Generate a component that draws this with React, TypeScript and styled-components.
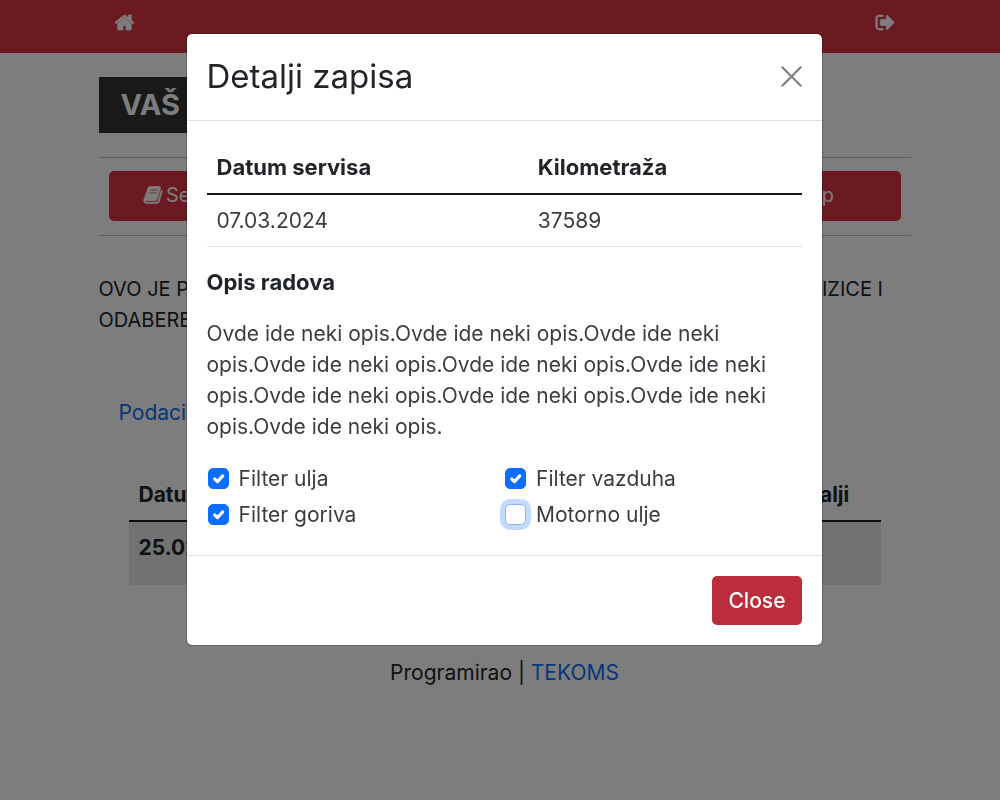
import React from "react";
import styled, { createGlobalStyle } from "styled-components";

const GlobalStyle = createGlobalStyle`
  *, *::before, *::after { box-sizing: border-box; }
  body {
    margin: 0;
    background: #fff;
    color: #212529;
    font-family: Inter, "Open Sans", sans-serif;
    font-size: 21px;
    line-height: 31px;
  }
  a { color: #0d6efd; text-decoration: none; }
  h1, h2, h3, p { margin: 0; }
`;

const TopBar = styled.header`
  height: 53px;
  padding-left: 9px;
  background: #dc3545;
`;

const TopBarInner = styled.nav`
  display: flex;
  justify-content: space-between;
  max-width: 812px;
  height: 45px;
  margin: 0 auto;
  padding: 0 15px;
  align-items: center;
`;

const IconLink = styled.a`
  display: flex;
  color: #fff;
`;

const Page = styled.main`
  padding: 24px 0 24px 9px;
`;

const Container = styled.div`
  max-width: 812px;
  margin: 0 auto;
`;

const Logo = styled.div`
  display: inline-block;
  padding: 0 22px;
  background: #333;
  color: #fff;
  font-size: 29px;
  font-weight: 700;
  line-height: 56px;
  vertical-align: top;
`;

const Actions = styled.div`
  display: grid;
  grid-template-columns: repeat(3, 1fr);
  gap: 20px;
  margin-top: 24px;
  padding: 13px 10px 14px;
  border-top: 1px solid #bcbdbf;
  border-bottom: 1px solid #bcbdbf;
`;

const Button = styled.button`
  display: inline-flex;
  align-items: center;
  justify-content: center;
  gap: 3px;
  padding: 9px 16px;
  border: 0;
  border-radius: 5px;
  background: ${(p: { $active?: boolean }) => (p.$active ? "#bb2d3b" : "#dc3545")};
  color: #fff;
  font: inherit;
  font-weight: 500;
  white-space: nowrap;
  cursor: pointer;
`;

const ActionButton = styled(Button)`
  height: 50px;
  padding: 9px 16px 11px;
  font-size: 20px;
  font-weight: 400;
`;

const Intro = styled.p`
  margin-top: 38px;
  font-size: 20px;
`;

const Records = styled.section`
  padding: 61px 30px 0;
`;

const RecordsLink = styled.a`
  display: inline-block;
  margin-left: -10px;
`;

const Table = styled.table`
  width: 100%;
  border-collapse: separate;
  border-spacing: 0;
  table-layout: fixed;
  text-align: left;

  th, td { padding: 10px; vertical-align: top; }
  thead th { border-bottom: 2px solid #16191c; }
`;

const RecordsTable = styled(Table)`
  margin-top: 41px;

  tbody tr { height: 63px; background: #e9e9e9; }
  th:last-child { width: 106px; }
`;

const Footer = styled.footer`
  margin-top: 72px;
  text-align: center;
`;

const Backdrop = styled.div`
  position: fixed;
  inset: 0;
  display: flex;
  align-items: flex-start;
  justify-content: center;
  padding: 33px 0 33px 8px;
  overflow: auto;
  background: rgba(0, 0, 0, 0.51);
`;

const Dialog = styled.section`
  width: 100%;
  max-width: 637px;
  border: 1px solid rgba(0, 0, 0, 0.2);
  border-radius: 6px;
  background: #fff;
  background-clip: padding-box;
`;

const DialogHeader = styled.div`
  display: flex;
  align-items: center;
  justify-content: space-between;
  padding: 19px 20px 20px;
  border-bottom: 1px solid #dee2e6;
`;

const DialogTitle = styled.h2`
  font-size: 33px;
  font-weight: 400;
  line-height: 47px;
`;

const CloseIconButton = styled.button`
  display: flex;
  padding: 0;
  border: 0;
  background: none;
  color: #000;
  opacity: 0.5;
  cursor: pointer;
`;

const DialogBody = styled.div`
  display: flex;
  flex-direction: column;
  gap: 20px;
  padding: 21px 20px 20px;
  color: #3a3e42;
`;

const DetailsTable = styled(Table)`
  th { color: #212529; font-size: 22px; }
  th:first-child { width: 54%; }
  td { border-bottom: 1px solid #dee2e6; }
`;

const SectionTitle = styled.h3`
  color: #212529;
  font-size: 22px;
  font-weight: 700;
`;

const CheckGrid = styled.div`
  display: grid;
  grid-template-columns: 1fr 1fr;
  row-gap: 5px;
  padding: 1px 0 5px;
`;

const CheckLabel = styled.label`
  display: flex;
  align-items: center;
  gap: 10px;
`;

const CheckBoxFrame = styled.span`
  display: grid;
  margin-left: 1px;

  > * { grid-area: 1 / 1; }
  svg { visibility: hidden; pointer-events: none; }
  input:checked + svg { visibility: visible; }
`;

const CheckInput = styled.input`
  appearance: none;
  width: 21px;
  height: 21px;
  margin: 0;
  border: 1px solid #bfbfbf;
  border-radius: 5px;
  background: #fff;

  &:checked { border-color: #0d6efd; background: #0d6efd; }
  &:focus {
    outline: none;
    border-color: #86b7fe;
    box-shadow: 0 0 0 5px rgba(13, 110, 253, 0.25);
  }
`;

const DialogFooter = styled.div`
  display: flex;
  justify-content: flex-end;
  padding: 20px;
  border-top: 1px solid #dee2e6;
`;

const icons = {
  home: "M1472 992v480q0 26-19 45t-45 19h-384v-384h-256v384h-384q-26 0-45-19t-19-45v-480q0-1 .5-3t.5-3l575-474 575 474q1 2 1 6zm223-69l-62 74q-8 9-21 11h-3q-13 0-21-7l-692-577-692 577q-12 8-24 7-13-2-21-11l-62-74q-8-10-7-23.5t11-21.5l719-599q32-26 76-26t76 26l244 204v-195q0-14 9-23t23-9h192q14 0 23 9t9 23v408l219 182q10 8 11 21.5t-7 23.5z",
  signOut:
    "M704 1440q0 4 1 20t.5 26.5-3 23.5-10 19.5-20.5 6.5h-320q-119 0-203.5-84.5t-84.5-203.5v-704q0-119 84.5-203.5t203.5-84.5h320q13 0 22.5 9.5t9.5 22.5q0 4 1 20t.5 26.5-3 23.5-10 19.5-20.5 6.5h-320q-66 0-113 47t-47 113v704q0 66 47 113t113 47h312l11.5 1 11.5 3 8 5.5 7 9 2 13.5zm928-544q0 26-19 45l-544 544q-19 19-45 19t-45-19-19-45v-288h-448q-26 0-45-19t-19-45v-384q0-26 19-45t45-19h448v-288q0-26 19-45t45-19 45 19l544 544q19 19 19 45z",
  book: "M1703 478q40 57 18 129l-275 906q-19 64-76.5 107.5t-122.5 43.5h-923q-77 0-148.5-53.5t-99.5-131.5q-24-67-2-127 0-4 3-27t4-37q1-8-3-21.5t-3-19.5q2-11 8-21t16.5-23.5 16.5-23.5q23-38 45-91.5t30-91.5q3-10 .5-30t-.5-28q3-11 17-28t17-23q21-36 42-92t25-90q1-9-2.5-32t.5-28q4-13 22-30.5t22-22.5q19-26 42.5-84.5t27.5-96.5q1-8-3-25.5t-2-26.5q2-8 9-18t18-23 17-21q8-12 16.5-30.5t15-35 16-36 19.5-32 26.5-23.5 36-11.5 47.5 5.5l-1 3q38-9 51-9h761q74 0 114 56t18 130l-274 906q-36 119-71.5 153.5t-128.5 34.5h-869q-27 0-38 15-11 16-1 43 24 70 144 70h923q29 0 56-15.5t35-41.5l300-987q7-22 5-57 38 15 59 43zm-1064 2q-4 13 2 22.5t20 9.5h608q13 0 25.5-9.5t16.5-22.5l21-64q4-13-2-22.5t-20-9.5h-608q-13 0-25.5 9.5t-16.5 22.5zm-83 256q-4 13 2 22.5t20 9.5h608q13 0 25.5-9.5t16.5-22.5l21-64q4-13-2-22.5t-20-9.5h-608q-13 0-25.5 9.5t-16.5 22.5z",
};

interface IconProps {
  name: keyof typeof icons;
  size?: number;
  bold?: boolean;
}

function Icon({ name, size = 20, bold }: IconProps) {
  return (
    <svg
      width={size}
      height={size}
      viewBox="0 0 1792 1792"
      fill="currentColor"
      stroke="currentColor"
      strokeWidth={bold ? 60 : 0}
      aria-hidden="true"
    >
      <path d={icons[name]} />
    </svg>
  );
}

interface CheckProps {
  label: string;
  checked?: boolean;
  focused?: boolean;
}

function Check({ label, checked, focused }: CheckProps) {
  return (
    <CheckLabel>
      <CheckBoxFrame>
        <CheckInput type="checkbox" defaultChecked={checked} autoFocus={focused} />
        <svg
          width="21"
          height="21"
          viewBox="0 0 20 20"
          fill="none"
          stroke="#fff"
          strokeWidth="3"
          strokeLinecap="round"
          strokeLinejoin="round"
        >
          <path d="M6.5 10.5l2.5 2.5 5-5.5" />
        </svg>
      </CheckBoxFrame>
      {label}
    </CheckLabel>
  );
}

const description = "Ovde ide neki opis.".repeat(10);

export default function App() {
  return (
    <>
      <GlobalStyle />
      <TopBar>
        <TopBarInner>
          <IconLink href="#pocetna" aria-label="Početna">
            <Icon name="home" size={21} bold />
          </IconLink>
          <IconLink href="#odjava" aria-label="Odjava">
            <Icon name="signOut" size={21} bold />
          </IconLink>
        </TopBarInner>
      </TopBar>
      <Page>
        <Container>
          <Logo>VAŠ LOGO</Logo>
          <Actions>
            <ActionButton>
              <Icon name="book" bold />
              Servisna knjižica
            </ActionButton>
            <ActionButton>Kontakt</ActionButton>
            <ActionButton>
              <Icon name="home" />
              Web shop
            </ActionButton>
          </Actions>
          <Intro>
            OVO JE POČETNA STRANA VAŠE DIGITALNE ELEKTRONSKE SERVISNE KNJIZICE I ODABERETE ZAPIS
          </Intro>
          <Records>
            <RecordsLink href="#podaci">Podaci o vozilu</RecordsLink>
            <RecordsTable>
              <thead>
                <tr>
                  <th>Datum</th>
                  <th>Kilometraža</th>
                  <th>Detalji</th>
                </tr>
              </thead>
              <tbody>
                <tr>
                  <th>25.02.2024</th>
                  <td>35000</td>
                  <td />
                </tr>
              </tbody>
            </RecordsTable>
          </Records>
          <Footer>
            Programirao | <a href="#tekoms">TEKOMS</a>
          </Footer>
        </Container>
      </Page>
      <Backdrop>
        <Dialog role="dialog" aria-modal="true" aria-labelledby="dialog-title">
          <DialogHeader>
            <DialogTitle id="dialog-title">Detalji zapisa</DialogTitle>
            <CloseIconButton aria-label="Zatvori">
              <svg
                width="21"
                height="21"
                viewBox="0 0 16 16"
                stroke="currentColor"
                strokeWidth="1.6"
                strokeLinecap="round"
              >
                <path d="M1 1l14 14M15 1L1 15" />
              </svg>
            </CloseIconButton>
          </DialogHeader>
          <DialogBody>
            <DetailsTable>
              <thead>
                <tr>
                  <th>Datum servisa</th>
                  <th>Kilometraža</th>
                </tr>
              </thead>
              <tbody>
                <tr>
                  <td>07.03.2024</td>
                  <td>37589</td>
                </tr>
              </tbody>
            </DetailsTable>
            <SectionTitle>Opis radova</SectionTitle>
            <p>{description}</p>
            <CheckGrid>
              <Check label="Filter ulja" checked />
              <Check label="Filter vazduha" checked />
              <Check label="Filter goriva" checked />
              <Check label="Motorno ulje" focused />
            </CheckGrid>
          </DialogBody>
          <DialogFooter>
            <Button $active>Close</Button>
          </DialogFooter>
        </Dialog>
      </Backdrop>
    </>
  );
}
